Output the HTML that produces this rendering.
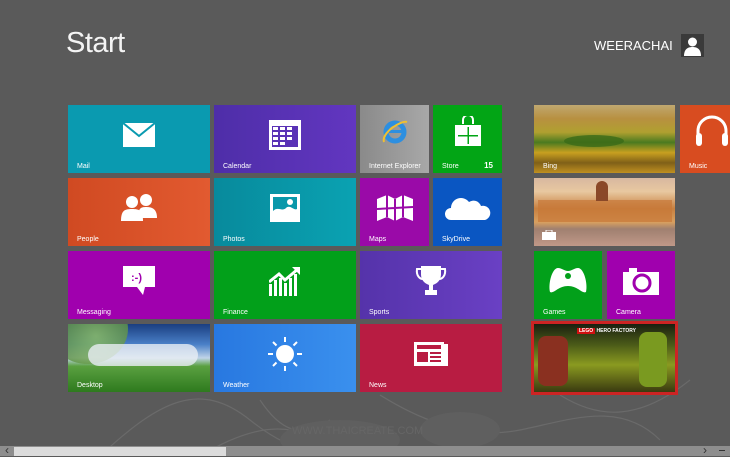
<!DOCTYPE html>
<html><head><meta charset="utf-8"><style>
*{margin:0;padding:0;box-sizing:border-box}
body{width:730px;height:456px;overflow:hidden;background:#5a5a5a;font-family:"Liberation Sans",sans-serif;position:relative;color:#fff}
.t{position:absolute;overflow:hidden}
.l{position:absolute;left:9px;bottom:3px;font-size:7px;color:#fff}
.ic{position:absolute;left:50%;top:44%;transform:translate(-50%,-50%)}
</style></head><body>
<svg style="position:absolute;left:0;top:0" width="730" height="456">
<g fill="none" stroke="#6a6a6a" stroke-width="1.2">
<path d="M100 456 C160 400 200 380 250 420 S330 456 360 430"/>
<path d="M260 400 C280 430 300 440 330 420"/>
<path d="M380 395 C420 420 470 440 520 430 S620 400 660 440"/>
<path d="M560 395 C600 420 640 420 690 380"/>
<path d="M200 456 C260 420 300 420 340 456"/>
</g>
<ellipse cx="340" cy="440" rx="60" ry="20" fill="#5f5f5f"/>
<ellipse cx="460" cy="430" rx="40" ry="18" fill="#5f5f5f"/>
</svg>
<div style="position:absolute;left:66px;top:27px;font-size:29px;color:#f4f4f4;letter-spacing:-0.5px">Start</div>
<div style="position:absolute;left:594px;top:38px;font-size:13px;color:#fff">WEERACHAI</div>
<div style="position:absolute;left:681px;top:34px;width:23px;height:23px;background:#3a3a3a">
<svg width="23" height="23"><circle cx="11.5" cy="8" r="4.5" fill="#fff"/><path d="M3 22 C3 15 7 13 11.5 13 S20 15 20 22Z" fill="#fff"/></svg></div>

<div class="t" style="left:68px;top:105px;width:142px;height:68px;background:#0a9ab0"><svg class="ic" width="32" height="24"><rect width="32" height="24" fill="#fff"/><path d="M0 0 L16 13 L32 0" fill="none" stroke="#0a9ab0" stroke-width="2"/></svg><span class="l">Mail</span></div>
<div class="t" style="left:214px;top:105px;width:142px;height:68px;background:linear-gradient(90deg,#4e2ea8,#6236c0)"><svg class="ic" width="32" height="30"><rect width="32" height="30" fill="#fff"/><g fill="#5a32b6"><rect x="3" y="6" width="26" height="21"/></g><g fill="#fff"><rect x="4" y="7" width="5" height="3"/><rect x="11" y="7" width="5" height="3"/><rect x="18" y="7" width="5" height="3"/><rect x="4" y="12" width="5" height="3"/><rect x="11" y="12" width="5" height="3"/><rect x="18" y="12" width="5" height="3"/><rect x="4" y="17" width="5" height="3"/><rect x="11" y="17" width="5" height="3"/><rect x="18" y="17" width="5" height="3"/><rect x="4" y="22" width="5" height="3"/><rect x="11" y="22" width="5" height="3"/></g></svg><span class="l">Calendar</span></div>
<div class="t" style="left:360px;top:105px;width:69px;height:68px;background:linear-gradient(90deg,#8a8a8a,#a8a8a8)"><svg class="ic" width="28" height="28" style="top:40%"><circle cx="14" cy="14" r="9" fill="none" stroke="#2d8fe0" stroke-width="5"/><rect x="8" y="12" width="14" height="3" fill="#2d8fe0"/><path d="M3 24 C0 15 20 2 26 4" fill="none" stroke="#f0c030" stroke-width="2"/></svg><span class="l">Internet Explorer</span></div>
<div class="t" style="left:433px;top:105px;width:69px;height:68px;background:#02a515"><svg class="ic" width="30" height="32" style="top:40%"><path d="M10 8 V4 a5 5 0 0 1 10 0 V8" fill="none" stroke="#fff" stroke-width="2"/><path d="M2 9 H28 V30 H2Z" fill="#fff"/><g fill="#02a515"><rect x="14.5" y="11" width="1.5" height="17"/><rect x="5" y="19" width="20" height="1.5"/></g></svg><span class="l">Store</span><span style="position:absolute;right:9px;bottom:3px;font-size:8px;font-weight:bold">15</span></div>
<div class="t" style="left:68px;top:178px;width:142px;height:68px;background:linear-gradient(90deg,#d04a22,#e25a30)"><svg class="ic" width="36" height="28"><circle cx="11" cy="8" r="6" fill="#fff"/><path d="M0 27 C0 16 4 15 11 15 S22 16 22 27Z" fill="#fff"/><circle cx="25" cy="6" r="6" fill="#fff"/><path d="M17 24 C17 14 20 13 25 13 S36 14 36 24Z" fill="#fff"/></svg><span class="l">People</span></div>
<div class="t" style="left:214px;top:178px;width:142px;height:68px;background:linear-gradient(90deg,#088a9c,#0aa2b2)"><svg class="ic" width="30" height="28"><rect width="30" height="28" fill="#fff"/><rect x="3" y="3" width="24" height="19" fill="#0a98aa"/><circle cx="20" cy="8" r="3" fill="#fff"/><path d="M3 22 L3 17 C8 12 12 18 16 14 S24 17 27 15 L27 22Z" fill="#fff"/></svg><span class="l">Photos</span></div>
<div class="t" style="left:360px;top:178px;width:69px;height:68px;background:#9a0aa8"><svg class="ic" width="36" height="30"><path d="M0 6 L10 2 L18 6 L26 2 L36 6 V28 L26 24 L18 28 L10 24 L0 28Z" fill="#fff"/><path d="M10 2 V24 M18 6 V28 M26 2 V24 M0 16 L36 14" stroke="#9a0aa8" stroke-width="2"/></svg><span class="l">Maps</span></div>
<div class="t" style="left:433px;top:178px;width:69px;height:68px;background:#0a56c2"><svg class="ic" width="46" height="28"><path d="M6 26 a6 6 0 0 1 0 -12 a10 10 0 0 1 18 -6 a8 8 0 0 1 12 4 a7 7 0 0 1 4 14Z" fill="#fff"/></svg><span class="l">SkyDrive</span></div>
<div class="t" style="left:68px;top:251px;width:142px;height:68px;background:#a000ae"><svg class="ic" width="32" height="30"><path d="M0 0 H32 V21 H22 L20 29 L14 21 H0Z" fill="#fff"/><text x="8" y="15" font-size="11" font-weight="bold" fill="#a000ae" font-family="Liberation Sans">:-)</text></svg><span class="l">Messaging</span></div>
<div class="t" style="left:214px;top:251px;width:142px;height:68px;background:#02a01a"><svg class="ic" width="32" height="30"><g fill="#fff"><rect x="0" y="18" width="3" height="12"/><rect x="5" y="14" width="3" height="16"/><rect x="10" y="12" width="3" height="18"/><rect x="15" y="17" width="3" height="13"/><rect x="20" y="12" width="3" height="18"/><rect x="25" y="8" width="3" height="22"/></g><path d="M0 16 L10 8 L16 14 L29 3" fill="none" stroke="#fff" stroke-width="3"/><path d="M23 1 H31 V9Z" fill="#fff"/></svg><span class="l">Finance</span></div>
<div class="t" style="left:360px;top:251px;width:142px;height:68px;background:linear-gradient(90deg,#5533aa,#6a40c4)"><svg class="ic" width="32" height="30"><path d="M6 0 H26 V8 C26 16 20 18 18 19 V24 H22 V29 H10 V24 H14 V19 C12 18 6 16 6 8Z" fill="#fff"/><path d="M7 3 H2 C1 10 5 13 8 13 M25 3 H30 C31 10 27 13 24 13" fill="none" stroke="#fff" stroke-width="2"/></svg><span class="l">Sports</span></div>
<div class="t" style="left:68px;top:324px;width:142px;height:68px;background:linear-gradient(180deg,#1a3e80 0%,#4a80c8 30%,#c0d4e8 50%,#5aa040 62%,#2e7a1e 100%)"><div style="position:absolute;left:-20px;top:-30px;width:80px;height:70px;border-radius:50%;background:radial-gradient(circle at 60% 60%,#8ec060,#3a6e30);opacity:.8"></div><div style="position:absolute;left:20px;top:20px;width:110px;height:22px;border-radius:12px;background:#e8eef4;opacity:.8"></div><span class="l">Desktop</span></div>
<div class="t" style="left:214px;top:324px;width:142px;height:68px;background:linear-gradient(90deg,#2878e0,#3a90ee)"><svg class="ic" width="34" height="34"><circle cx="17" cy="17" r="9" fill="#fff"/><g stroke="#fff" stroke-width="2"><path d="M17 0v5M17 29v5M0 17h5M29 17h5M5 5l3.5 3.5M25.5 25.5L29 29M5 29l3.5-3.5M25.5 8.5L29 5"/></g></svg><span class="l">Weather</span></div>
<div class="t" style="left:360px;top:324px;width:142px;height:68px;background:#b81c42"><svg class="ic" width="34" height="28"><path d="M0 2 H30 V26 H0Z M30 4 H34 V26 H30" fill="#fff"/><g fill="#b81c42"><rect x="3" y="5" width="24" height="4"/><rect x="3" y="12" width="11" height="10"/><rect x="16" y="12" width="11" height="2"/><rect x="16" y="16" width="11" height="2"/><rect x="16" y="20" width="11" height="2"/></g></svg><span class="l">News</span></div>

<div class="t" style="left:534px;top:105px;width:141px;height:68px;background:linear-gradient(180deg,#c0a870 0%,#b89040 20%,#b0a030 40%,#4a7a20 55%,#c8a020 70%,#806018 85%,#c09020 100%)"><div style="position:absolute;left:30px;top:30px;width:60px;height:12px;border-radius:50%;background:#3a6a18;opacity:.8"></div><span class="l">Bing</span></div>
<div class="t" style="left:680px;top:105px;width:50px;height:68px;background:#d84c20"><svg style="position:absolute;left:15px;top:10px" width="34" height="32"><path d="M3 22 V16 a14 14 0 0 1 28 0 V22" fill="none" stroke="#fff" stroke-width="3"/><rect x="1" y="18" width="6" height="13" rx="3" fill="#fff"/><rect x="27" y="18" width="6" height="13" rx="3" fill="#fff"/></svg><span class="l">Music</span></div>
<div class="t" style="left:534px;top:178px;width:141px;height:68px;background:linear-gradient(180deg,#d8b8a0 0%,#e8c8a0 20%,#c88040 45%,#d8a060 65%,#a08070 75%,#c09888 100%)"><div style="position:absolute;left:4px;top:22px;width:134px;height:22px;background:#c87838;opacity:.7"></div><div style="position:absolute;left:62px;top:3px;width:12px;height:20px;border-radius:6px 6px 0 0;background:#8a4828"></div><svg style="position:absolute;left:8px;top:52px" width="14" height="10"><rect y="2" width="14" height="8" fill="#fff"/><rect x="4" width="6" height="3" fill="none" stroke="#fff"/></svg></div>
<div class="t" style="left:534px;top:251px;width:68px;height:68px;background:#02a01a"><svg class="ic" width="40" height="26"><path d="M10 0 C14 0 16 3 20 3 S26 0 30 0 C36 0 40 16 38 24 C34 26 30 18 20 18 S6 26 2 24 C0 16 4 0 10 0Z" fill="#fff"/><circle cx="20" cy="8" r="3" fill="#02a01a"/></svg><span class="l">Games</span></div>
<div class="t" style="left:607px;top:251px;width:68px;height:68px;background:#a000ae"><svg class="ic" width="36" height="28"><path d="M0 5 H6 V1 H14 V5 H36 V28 H0Z" fill="#fff"/><circle cx="19" cy="16" r="8" fill="none" stroke="#a000ae" stroke-width="3"/></svg><span class="l">Camera</span></div>
<div class="t" style="left:531px;top:321px;width:147px;height:74px;border:3px solid #cc2424;background:linear-gradient(180deg,#1a2010 0%,#4a5a18 30%,#8a9a20 60%,#3a3a10 100%)"><div style="position:absolute;left:43px;top:4px;font-size:5px;font-weight:bold;color:#fff"><span style="background:#d01010;padding:0 2px">LEGO</span> HERO FACTORY</div><div style="position:absolute;left:4px;top:12px;width:30px;height:50px;background:#8a3020;border-radius:8px"></div><div style="position:absolute;left:105px;top:8px;width:28px;height:55px;background:#7a9a20;border-radius:8px"></div></div>

<div style="position:absolute;left:292px;top:425px;font-size:11px;color:#666">WWW.THAICREATE.COM</div>
<div style="position:absolute;left:0;top:446px;width:730px;height:10px;background:#8e8e8e"></div>
<div style="position:absolute;left:14px;top:447px;width:212px;height:9px;background:#dcdcdc"></div>
<div style="position:absolute;left:5px;top:443px;font-size:12px;color:#333">&#8249;</div>
<div style="position:absolute;left:703px;top:443px;font-size:12px;color:#333">&#8250;</div>
<div style="position:absolute;left:719px;top:450px;width:6px;height:1px;background:#333"></div>
</body></html>
